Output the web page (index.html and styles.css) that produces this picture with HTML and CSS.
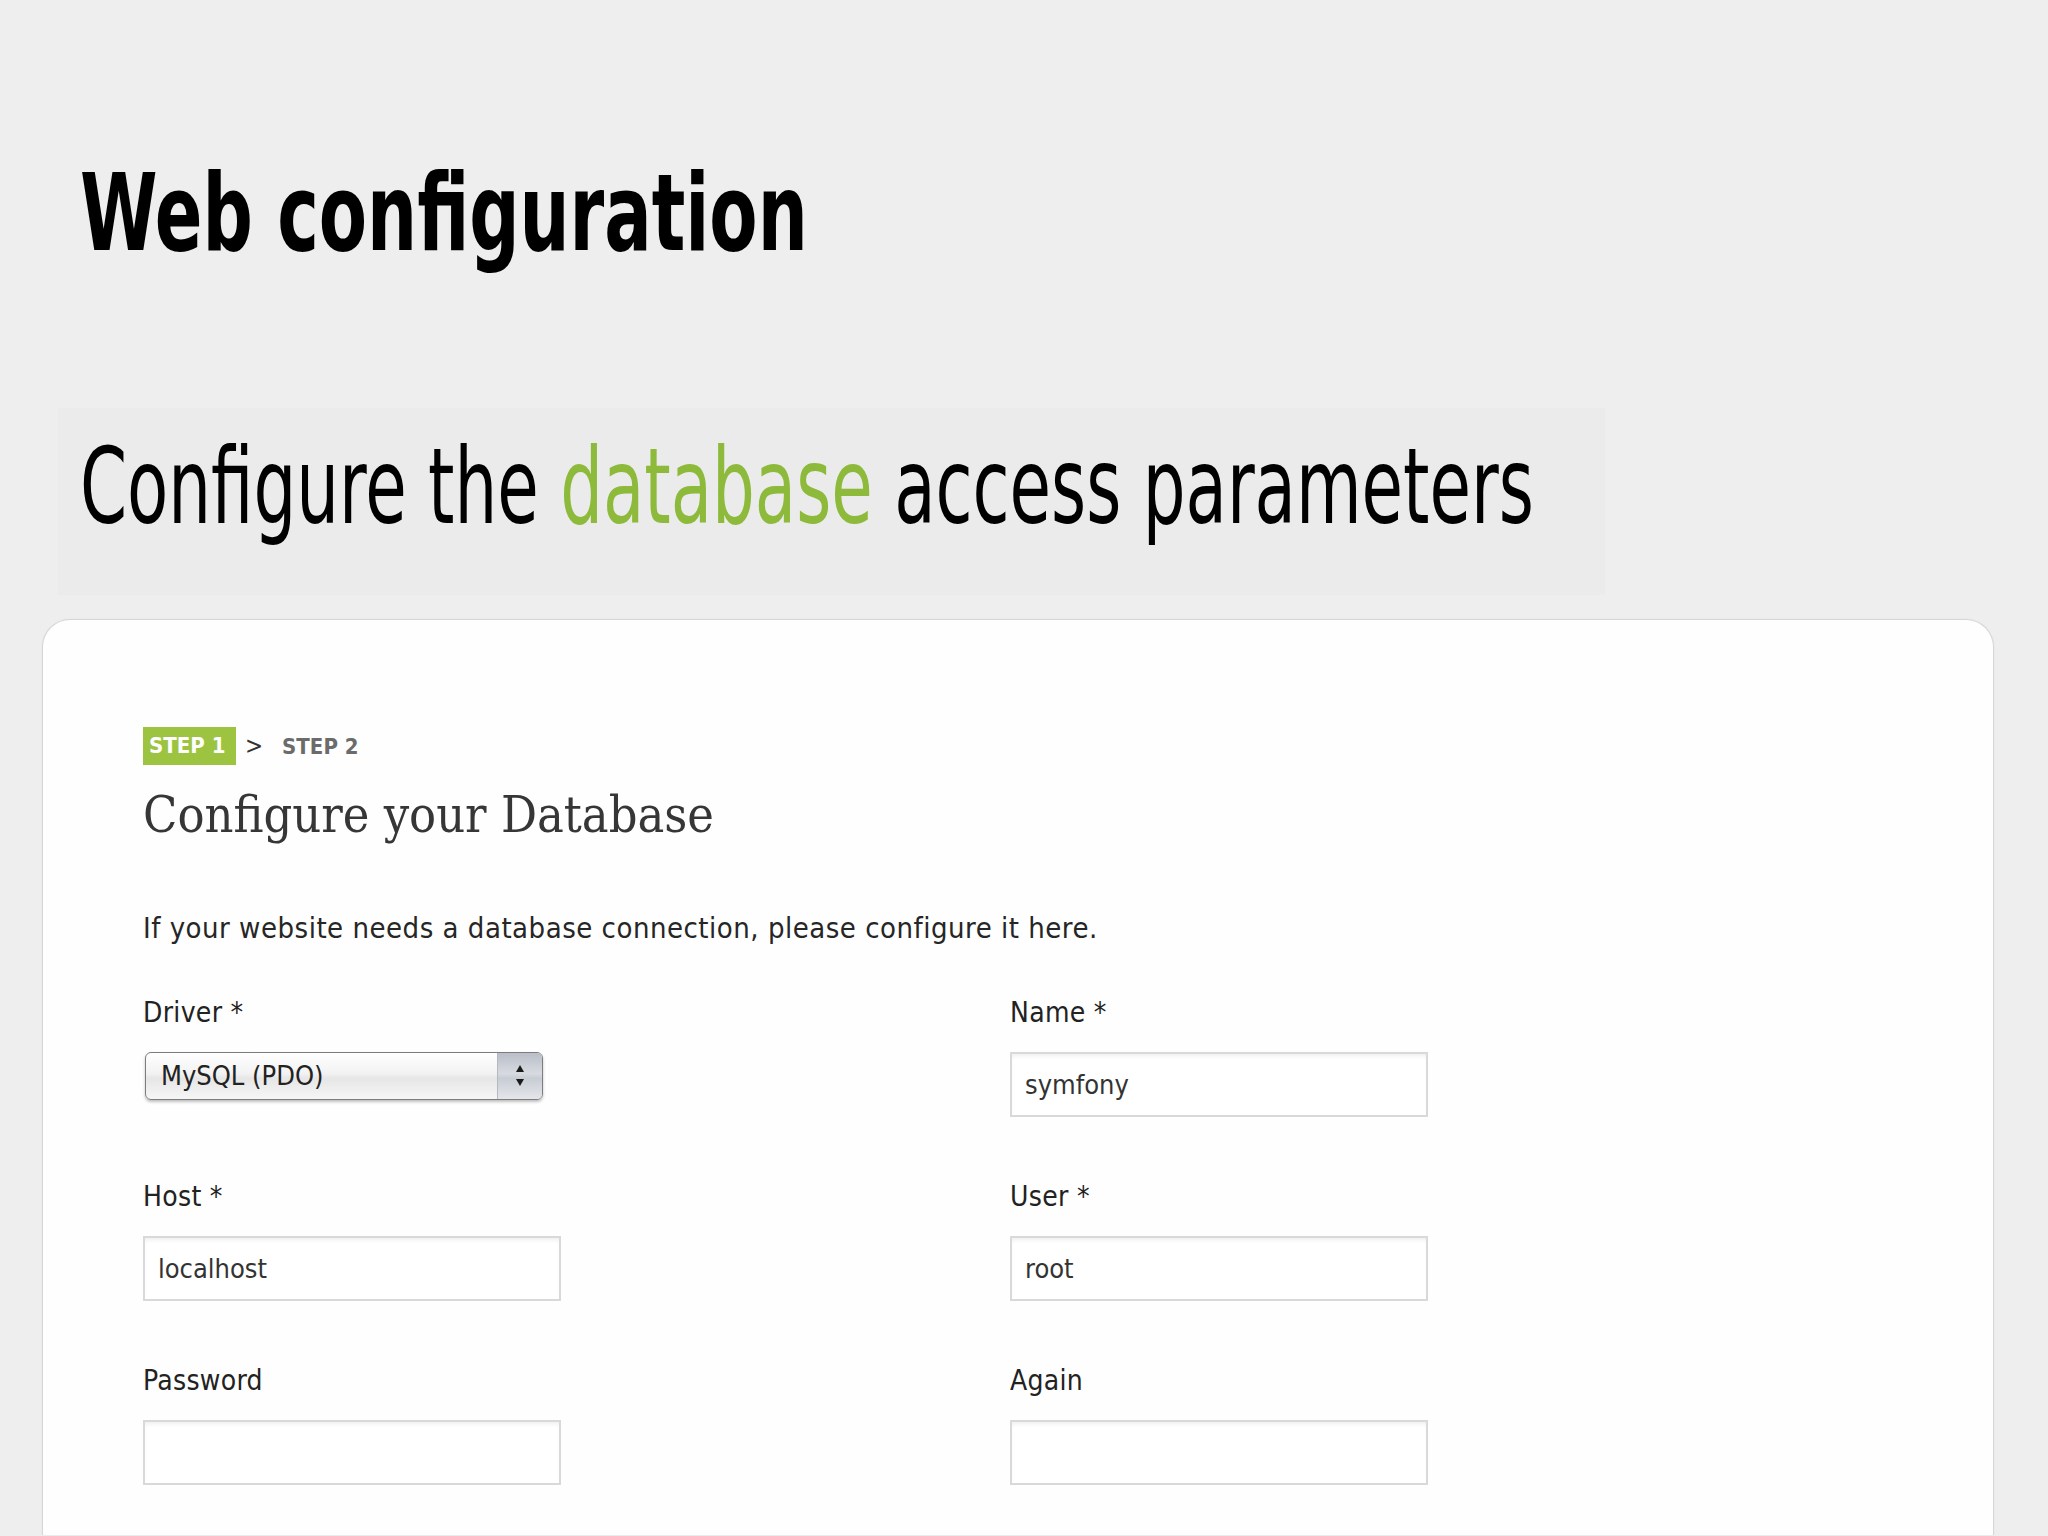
FILE: index.html
```html
<!DOCTYPE html>
<html lang="en">
<head>
<meta charset="utf-8">
<title>Web configuration</title>
<link rel="stylesheet" href="styles.css">
</head>
<body>
<header class="slide-head">
  <h1 class="slide-title"><span class="squeeze">Web configuration</span></h1>
</header>
<section class="subtitle-band">
  <p class="subtitle"><span class="squeeze">Configure the <span class="accent">database</span> access parameters</span></p>
</section>
<main class="card">
  <div class="steps">
    <span class="step-badge">STEP 1</span>
    <span class="step-sep">&gt;</span>
    <span class="step-next">STEP 2</span>
  </div>
  <h2 class="form-title">Configure your Database</h2>
  <p class="intro">If your website needs a database connection, please configure it here.</p>
  <div class="form-grid">
    <div class="field">
      <div class="label">Driver *</div>
      <div class="select">
        <span class="select-value">MySQL (PDO)</span>
        <span class="select-arrows">
          <svg width="10" height="24" viewBox="0 0 10 24"><path d="M5 1 L9 8 L1 8 Z" fill="#1a1a1a"/><path d="M1 15 L9 15 L5 22 Z" fill="#1a1a1a"/></svg>
        </span>
      </div>
    </div>
    <div class="field">
      <div class="label">Name *</div>
      <div class="input">symfony</div>
    </div>
    <div class="field">
      <div class="label">Host *</div>
      <div class="input">localhost</div>
    </div>
    <div class="field">
      <div class="label">User *</div>
      <div class="input">root</div>
    </div>
    <div class="field">
      <div class="label">Password</div>
      <div class="input"></div>
    </div>
    <div class="field">
      <div class="label">Again</div>
      <div class="input"></div>
    </div>
  </div>
</main>
</body>
</html>
```

FILE: styles.css
```css
html, body {
  margin: 0;
  padding: 0;
}
body {
  background: #eeeeee;
  width: 2048px;
  height: 1536px;
  overflow: hidden;
  font-family: "DejaVu Sans Condensed", "DejaVu Sans", sans-serif;
  font-stretch: condensed;
}
.slide-head {
  padding: 160px 0 0 80px;
  height: 408px;
  box-sizing: border-box;
}
.slide-title {
  margin: 0;
  font-size: 107px;
  line-height: 107px;
  font-weight: bold;
  color: #000;
  white-space: nowrap;
}
.squeeze {
  display: inline-block;
  transform: scaleX(0.73);
  transform-origin: left center;
}
.subtitle-band {
  margin-left: 58px;
  width: 1547px;
  height: 187px;
  box-sizing: border-box;
  padding: 26px 0 0 22px;
  background: #ebebeb;
}
.subtitle {
  margin: 0;
  font-size: 106px;
  line-height: 106px;
  font-weight: normal;
  color: #000;
  white-space: nowrap;
}
.subtitle .squeeze {
  transform: scaleX(0.707);
}
.accent {
  color: #8dba3b;
}
.card {
  margin: 24px 0 0 42px;
  width: 1952px;
  height: 916px;
  box-sizing: border-box;
  background: #fefefe;
  border: 1px solid #d6d6d6;
  border-bottom: none;
  border-radius: 28px 28px 0 0;
  padding: 107px 0 0 100px;
  box-shadow: 0 0 2px rgba(0,0,0,0.05);
  overflow: hidden;
}
.steps {
  display: flex;
  align-items: center;
  height: 38px;
  font-weight: bold;
  font-size: 22px;
}
.step-badge {
  width: 93px;
  height: 38px;
  box-sizing: border-box;
  padding-left: 6px;
  line-height: 38px;
  background: #9cc440;
  color: #fff;
}
.step-sep {
  margin-left: 9px;
  font-weight: normal;
  color: #333;
  font-size: 24px;
}
.step-next {
  margin-left: 19px;
  color: #6b6b6b;
}
.form-title {
  margin: 25px 0 0 0;
  font-family: "DejaVu Serif Condensed", "DejaVu Serif", serif;
  font-stretch: condensed;
  font-weight: normal;
  font-size: 50px;
  line-height: 50px;
  color: #363636;
}
.intro {
  margin: 74px 0 0 0;
  font-size: 29px;
  line-height: 28px;
  letter-spacing: 0.5px;
  color: #262626;
}
.form-grid {
  margin-top: 57px;
  display: grid;
  grid-template-columns: 867px 418px;
  row-gap: 66px;
}
.label {
  font-size: 28px;
  line-height: 28px;
  letter-spacing: 0.3px;
  color: #222;
  height: 28px;
  margin-bottom: 25px;
}
.input {
  width: 418px;
  height: 65px;
  box-sizing: border-box;
  border: 2px solid #d9d9d9;
  background: #fff;
  box-shadow: inset 0 4px 4px -2px rgba(0,0,0,0.07);
  padding-left: 13px;
  font-size: 27px;
  line-height: 61px;
  color: #333;
}
.select {
  margin-left: 2px;
  width: 398px;
  height: 48px;
  box-sizing: border-box;
  border: 1px solid #7d7d7d;
  border-radius: 6px;
  background: linear-gradient(#ffffff 0%, #f2f2f2 45%, #e6e6e6 55%, #f6f6f6 100%);
  box-shadow: 0 2px 3px rgba(0,0,0,0.25);
  display: flex;
  align-items: stretch;
  overflow: hidden;
}
.select-value {
  flex: 1;
  padding-left: 15px;
  font-size: 27px;
  line-height: 46px;
  color: #222;
}
.select-arrows {
  width: 44px;
  border-left: 1px solid #b5b8bf;
  background: linear-gradient(#b9bec8 0%, #d7dae0 45%, #c8ccd4 55%, #e4e6ea 100%);
  display: flex;
  align-items: center;
  justify-content: center;
}
```
